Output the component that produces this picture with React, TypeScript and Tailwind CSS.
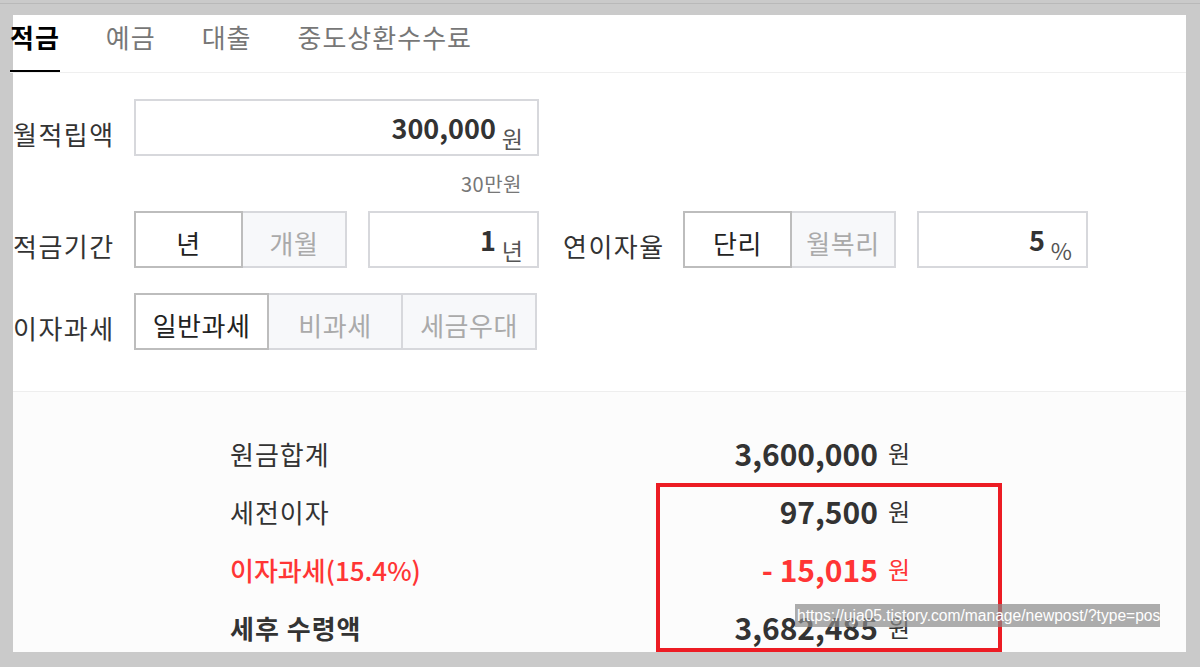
import React from 'react';

const font = "font-['Noto_Sans_CJK_KR','Noto_Sans',sans-serif]";

function Seg({ items, widths }: { items: string[]; widths: string[] }) {
  return (
    <div className="flex h-[57px]">
      {items.map((t, i) =>
        i === 0 ? (
          <div
            key={t}
            className={`${widths[i]} h-full flex items-center justify-center border-2 border-[#bdbdbd] bg-white text-[26px] tracking-[0.5px] text-[#222]`}
          >
            <span className="mt-[6px]">{t}</span>
          </div>
        ) : (
          <div
            key={t}
            className={`${widths[i]} h-full flex items-center justify-center border-y-2 border-r-2 border-[#d7d8dc] bg-[#f7f8fa] text-[26px] tracking-[0.5px] text-[#aaaaaa]`}
          >
            <span className="mt-[6px]">{t}</span>
          </div>
        )
      )}
    </div>
  );
}

function NumBox({ value, unit, width }: { value: string; unit: string; width: string }) {
  return (
    <div className={`${width} h-[57px] border-2 border-[#d7d8dc] bg-white flex items-center justify-end pr-[14px]`}>
      <span className="text-[27px] font-bold text-[#333] leading-none">{value}</span>
      <span className="text-[23px] text-[#555] leading-none ml-[6px] mt-[22px]">{unit}</span>
    </div>
  );
}

function Label({ text, width }: { text: string; width: string }) {
  return <div className={`${width} text-[26px] tracking-[1.5px] text-[#333] mt-[12px]`}>{text}</div>;
}

function ResultRow({
  label,
  value,
  labelClass,
  valueClass,
}: {
  label: string;
  value: string;
  labelClass: string;
  valueClass: string;
}) {
  return (
    <div className="h-[58px] w-[680px] flex items-center justify-between">
      <span className={`text-[26px] ${labelClass}`}>{label}</span>
      <span className={`flex items-center ${valueClass}`}>
        <span className="text-[30px] font-bold leading-none">{value}</span>
        <span className="text-[24px] leading-none ml-[10px]">원</span>
      </span>
    </div>
  );
}

export default function App() {
  return (
    <div className={`relative w-[1200px] h-[667px] overflow-hidden bg-[#cacaca] ${font}`}>
      <div className="h-[3px]" />
      <div className="h-px bg-[#b9b9b9]" />
      <div className="h-[11px]" />

      <div className="ml-[13px] mr-[14px] h-[637px] bg-white flex flex-col">
        {/* tabs */}
        <div className="h-[58px] border-b border-[#efefef] flex gap-[46px] -ml-[3px] text-[26px] tracking-[1px] leading-[30px]">
          <div className="h-full pt-[7px] border-b-2 border-black -mb-px">
            <span className="font-bold text-black">적금</span>
          </div>
          <div className="h-full pt-[7px]">
            <span className="text-[#777]">예금</span>
          </div>
          <div className="h-full pt-[7px]">
            <span className="text-[#777]">대출</span>
          </div>
          <div className="h-full pt-[7px]">
            <span className="text-[#777]">중도상환수수료</span>
          </div>
        </div>

        {/* form */}
        <div className="flex flex-col pt-[26px] h-[319px] border-b border-[#eeeeee]">
          <div className="flex items-center">
            <Label text="월적립액" width="w-[121px]" />
            <NumBox value="300,000" unit="원" width="w-[405px]" />
          </div>
          <div className="h-[55px] w-[526px] flex items-center justify-end pr-[17px] text-[20px] tracking-[0.5px] text-[#777]">
            30만원
          </div>
          <div className="flex items-center">
            <Label text="적금기간" width="w-[121px]" />
            <Seg items={['년', '개월']} widths={['w-[109px]', 'w-[104px]']} />
            <div className="w-[21px]" />
            <NumBox value="1" unit="년" width="w-[171px]" />
            <div className="w-[24px]" />
            <Label text="연이자율" width="w-[120px]" />
            <Seg items={['단리', '월복리']} widths={['w-[109px]', 'w-[104px]']} />
            <div className="w-[21px]" />
            <NumBox value="5" unit="%" width="w-[171px]" />
          </div>
          <div className="flex items-center mt-[25px]">
            <Label text="이자과세" width="w-[121px]" />
            <Seg items={['일반과세', '비과세', '세금우대']} widths={['w-[135px]', 'w-[134px]', 'w-[134px]']} />
          </div>
        </div>

        {/* results */}
        <div className="flex-1 bg-[#fcfcfc] pl-[217px] pt-[32px] overflow-hidden">
          <ResultRow label="원금합계" value="3,600,000" labelClass="tracking-[1px] text-[#333]" valueClass="text-[#333]" />
          <ResultRow label="세전이자" value="97,500" labelClass="tracking-[1px] text-[#333]" valueClass="text-[#333]" />
          <ResultRow
            label="이자과세(15.4%)"
            value="- 15,015"
            labelClass="text-[#ff3535] font-medium"
            valueClass="text-[#ff3535]"
          />
          <ResultRow
            label="세후 수령액"
            value="3,682,485"
            labelClass="tracking-[1px] text-[#333] font-bold"
            valueClass="text-[#333]"
          />
        </div>
      </div>

      {/* annotation box */}
      <div className="absolute left-[656px] top-[483px] w-[346px] h-[169px] border-4 border-[#ec1c24]" />
      {/* link tooltip */}
      <div className="absolute left-[795px] top-[604px] w-[365px] h-[23px] bg-[#8a8a8a]/70 text-white text-[15.6px] leading-[23px] px-[2px] font-['Liberation_Sans',sans-serif] whitespace-nowrap overflow-hidden">
        https://uja05.tistory.com/manage/newpost/?type=pos
      </div>
    </div>
  );
}
